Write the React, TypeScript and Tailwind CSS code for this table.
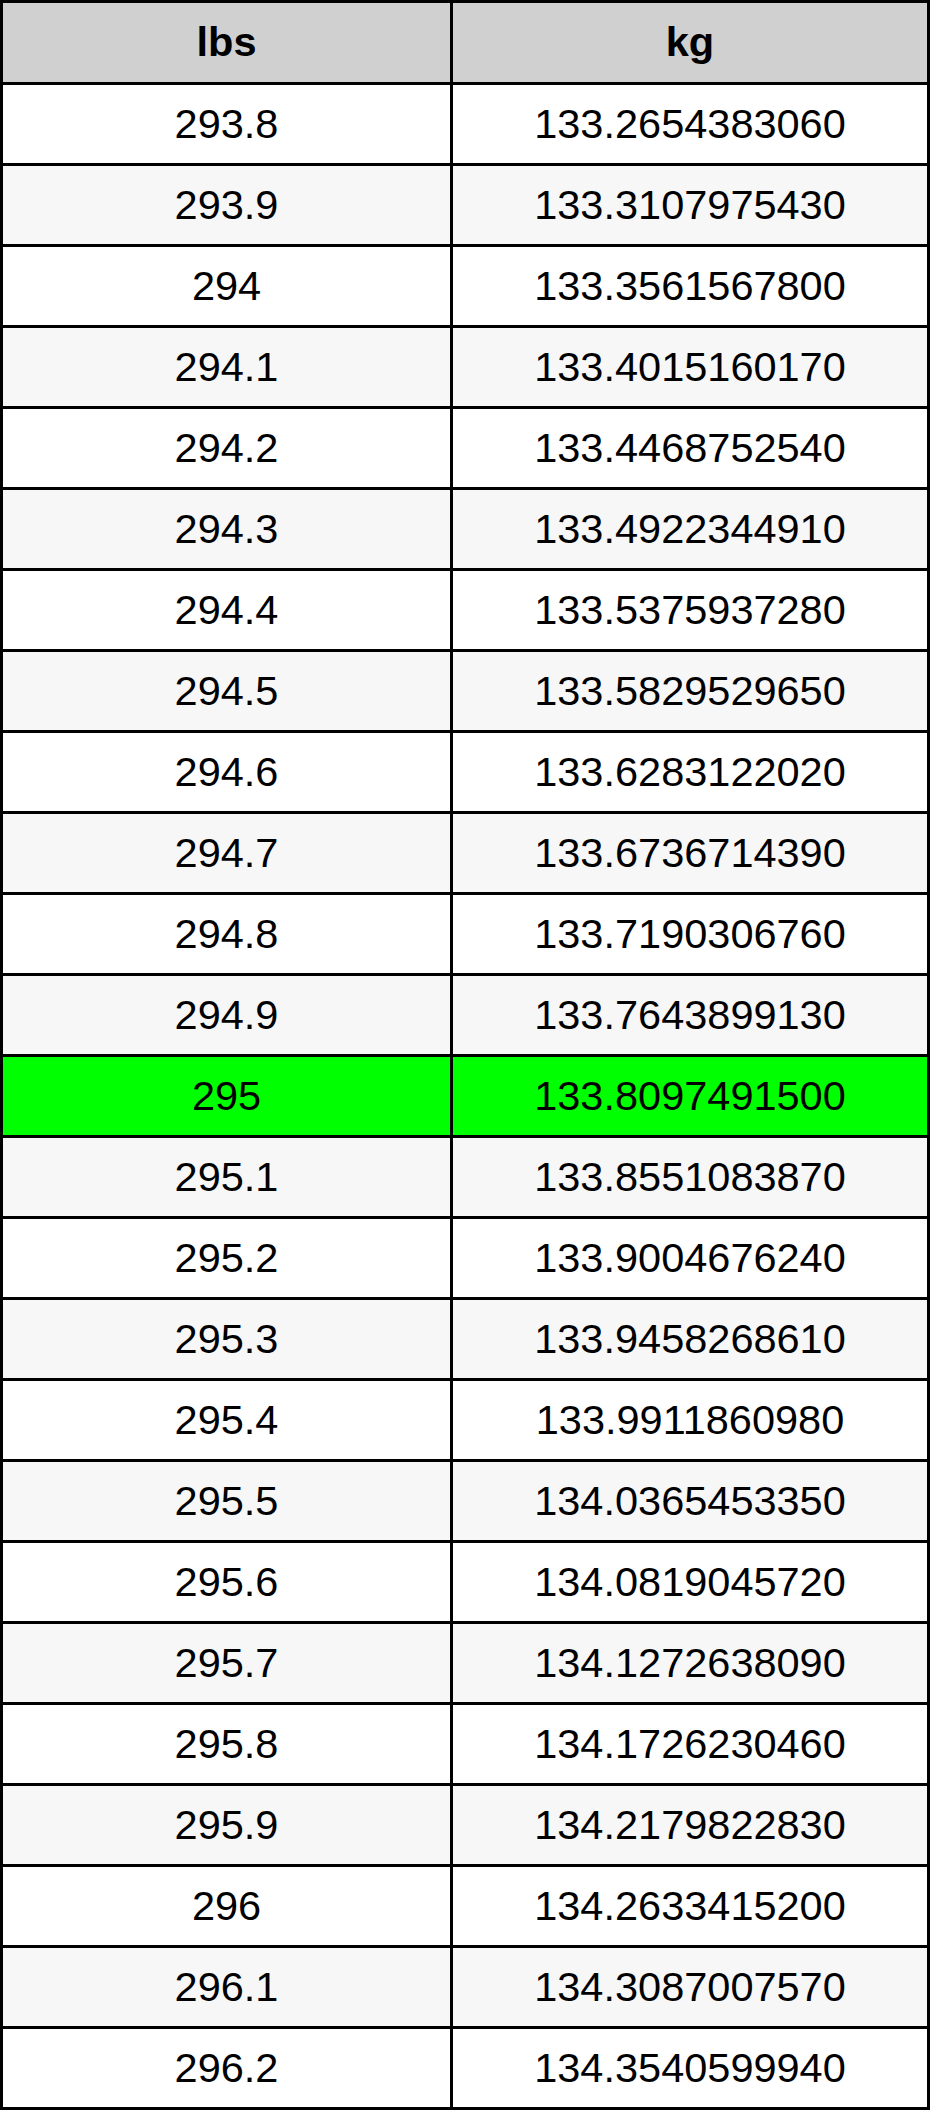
const rows: [string, string][] = [
  ['293.8', '133.2654383060'],
  ['293.9', '133.3107975430'],
  ['294', '133.3561567800'],
  ['294.1', '133.4015160170'],
  ['294.2', '133.4468752540'],
  ['294.3', '133.4922344910'],
  ['294.4', '133.5375937280'],
  ['294.5', '133.5829529650'],
  ['294.6', '133.6283122020'],
  ['294.7', '133.6736714390'],
  ['294.8', '133.7190306760'],
  ['294.9', '133.7643899130'],
  ['295', '133.8097491500'],
  ['295.1', '133.8551083870'],
  ['295.2', '133.9004676240'],
  ['295.3', '133.9458268610'],
  ['295.4', '133.9911860980'],
  ['295.5', '134.0365453350'],
  ['295.6', '134.0819045720'],
  ['295.7', '134.1272638090'],
  ['295.8', '134.1726230460'],
  ['295.9', '134.2179822830'],
  ['296', '134.2633415200'],
  ['296.1', '134.3087007570'],
  ['296.2', '134.3540599940'],
];

export default function App() {
  return (
    <div className="w-[930px] bg-white font-['Liberation_Sans',Arial,sans-serif] text-[41.5px] text-black">
      <div className="border-[3px] border-black">
        {/* Header */}
        <div className="flex h-[82px] border-b-[3px] border-black bg-[#d0d0d0] font-bold">
          <div className="flex w-[450px] items-center justify-center border-r-[3px] border-black">lbs</div>
          <div className="flex flex-1 items-center justify-center">kg</div>
        </div>

        {rows.map(([lbs, kg], i) => {
          const highlight = lbs === '295';
          const bg = highlight ? 'bg-[#00ff00]' : i % 2 === 1 ? 'bg-[#f7f7f7]' : 'bg-white';
          const last = i === rows.length - 1;
          return (
            <div
              key={lbs}
              className={`flex ${bg} ${last ? 'h-[78px]' : 'h-[81px] border-b-[3px] border-black'}`}
            >
              <div className="flex w-[450px] items-center justify-center border-r-[3px] border-black">{lbs}</div>
              <div className="flex flex-1 items-center justify-center">{kg}</div>
            </div>
          );
        })}
      </div>
    </div>
  );
}
